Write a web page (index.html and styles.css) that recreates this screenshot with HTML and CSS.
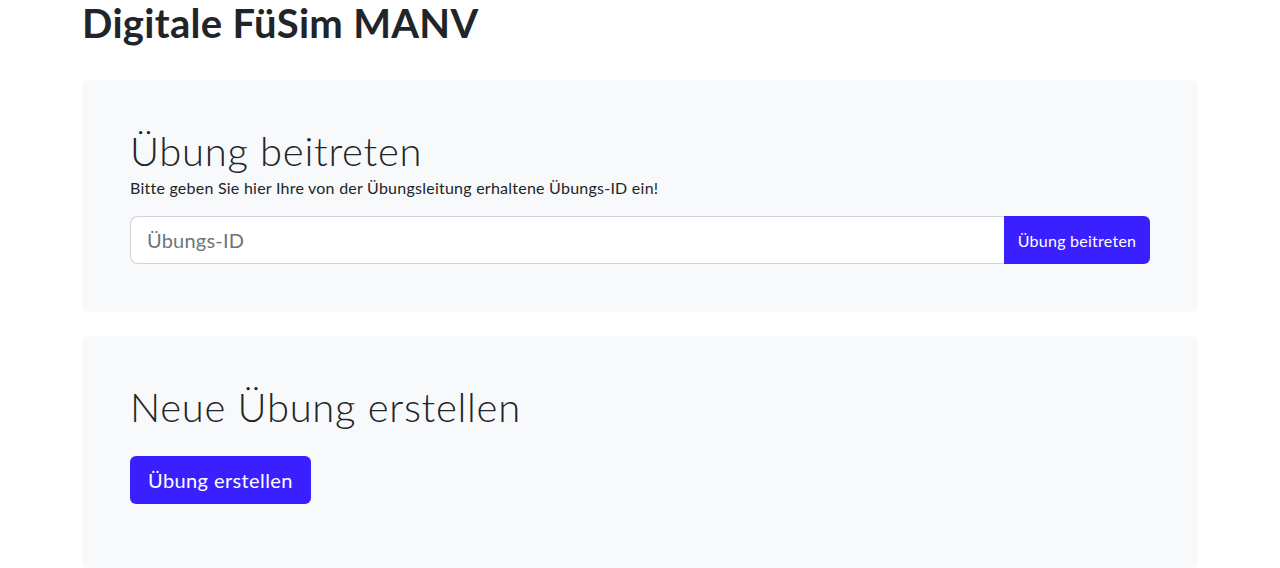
FILE: index.html
```html
<!DOCTYPE html>
<html lang="de">
<head>
<meta charset="utf-8">
<title>Digitale FüSim MANV</title>
<link rel="stylesheet" href="styles.css">
</head>
<body>
<main class="container">
  <h1 class="title">Digitale FüSim MANV</h1>
  <section class="card card-join">
    <h2 class="card-heading">Übung beitreten</h2>
    <p class="card-text">Bitte geben Sie hier Ihre von der Übungsleitung erhaltene Übungs-ID ein!</p>
    <form class="input-group">
      <input class="input" type="text" placeholder="Übungs-ID">
      <button class="btn btn-join" type="button">Übung beitreten</button>
    </form>
  </section>
  <section class="card card-create">
    <h2 class="card-heading">Neue Übung erstellen</h2>
    <div class="actions">
      <button class="btn btn-lg" type="button">Übung erstellen</button>
    </div>
  </section>
</main>
</body>
</html>
```

FILE: styles.css
```css
* { box-sizing: border-box; }
html, body { margin: 0; padding: 0; }
body {
  font-family: Lato, "Open Sans", "Noto Sans", sans-serif;
  font-size: 16px;
  line-height: 1.5;
  color: #212529;
  background: #fff;
}
.container {
  width: 1140px;
  margin: 0 auto;
  padding: 0 12px;
}
.title {
  margin: 0 0 34px;
  font-size: 40px;
  line-height: 46px;
  font-weight: 700;
  letter-spacing: 0.3px;
}
.card {
  background: #f8f9fa;
  border-radius: 6px;
  padding: 48px;
  margin-bottom: 24px;
}
.card-create { height: 232px; }
.card-heading {
  margin: 0;
  font-size: 40px;
  line-height: 46px;
  padding-bottom: 2px;
  font-weight: 300;
  letter-spacing: 0.7px;
}
.card-text {
  margin: 0 0 16px;
  letter-spacing: 0.24px;
}
.input-group {
  display: flex;
  height: 48px;
  margin: 0;
}
.input {
  flex: 1;
  min-width: 0;
  height: 48px;
  border: 1px solid #ced4da;
  border-right: none;
  border-radius: 8px 0 0 8px;
  padding: 0 16px;
  font-family: inherit;
  font-size: 20px;
  letter-spacing: 0.2px;
  color: #212529;
  background: #fff;
  outline: none;
}
.input::placeholder { color: #6c757d; }
.btn {
  font-family: inherit;
  border: none;
  background: #3a20ff;
  color: #fff;
  cursor: pointer;
}
.btn-join {
  width: 146px;
  height: 48px;
  padding: 0 12px;
  font-size: 16px;
  letter-spacing: 0.25px;
  border-radius: 0 6px 6px 0;
}
.actions { margin-top: 24px; }
.btn-lg {
  height: 48px;
  padding: 0 18px;
  font-size: 20px;
  letter-spacing: 0.4px;
  border-radius: 6px;
}
```
